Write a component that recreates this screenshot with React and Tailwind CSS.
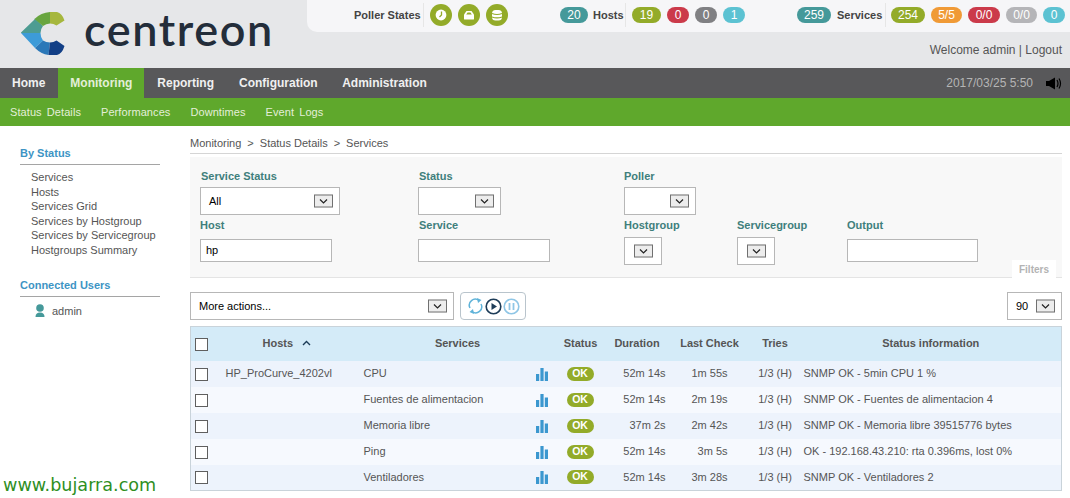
import React from "react";

const F = "[font-family:'Liberation_Sans',Arial,sans-serif]";

function Pill({ c, children, w }) {
  return (
    <span className={`inline-flex h-[16px] items-center justify-center rounded-full text-[12px] font-normal text-white ${c} ${w}`}>
      {children}
    </span>
  );
}

function Logo() {
  return (
    <svg width="60" height="52" viewBox="0 0 60 52" className="block">
      <path d="M6 24.5 L19 12 L20 10.5 L28 18 Q25.5 21 25.5 25 L6 25 Z" fill="#4d9c92" />
      <path d="M19.5 11 Q26 4.5 35 4 L35 15.5 Q31 15.5 28 18 Z" fill="#68a53f" />
      <path d="M35 4 L42 4 Q47 5 49.5 12.5 L41.5 17.5 Q38.5 15.5 35 15.5 Z" fill="#a6b73d" />
      <path d="M6 25 L25.5 25 Q25.5 29.5 28 32.5 L20 40 Z" fill="#3d9bd8" />
      <path d="M20 40 L28 32.5 Q31 34.5 35 34.5 L33.5 47 Q26 46 20 40 Z" fill="#2b78b8" />
      <path d="M35 34.5 Q38.5 34.5 41.5 32.5 L49.5 38 Q47 46 42 47 L33.5 47 Z" fill="#123f86" />
    </svg>
  );
}

function Sel({ w, value, h = "h-[28px]", btn = "right-[6px]" }) {
  return (
    <div className={`relative flex ${w} ${h} items-center border border-[#b7b7b7] bg-white pl-[8px] text-[11px] text-black`}>
      {value}
      <span className={`absolute ${btn} top-1/2 flex h-[13px] w-[19px] -translate-y-1/2 items-center justify-center border border-[#707070] bg-[#ededed]`}>
        <svg width="9" height="6" viewBox="0 0 9 6"><path d="M1 1 L4.5 4.5 L8 1" fill="none" stroke="#222" strokeWidth="1.2" /></svg>
      </span>
    </div>
  );
}

function Label({ children, inset = "" }) {
  return <div className={`h-[16px] text-[11px] font-bold leading-[16px] text-[#3f7f7c] ${inset}`}>{children}</div>;
}

function Input({ w, value }) {
  return (
    <div className={`flex ${w} h-[23px] items-center border border-[#b7b7b7] bg-white pl-[5px] text-[11px] text-black`}>{value}</div>
  );
}

function Check() {
  return <span className="mt-[1px] block h-[13px] w-[13px] border border-[#5f5f5f] bg-white" />;
}

function Bars() {
  return (
    <svg width="12" height="13" viewBox="0 0 12 13" className="mt-[1px] block">
      <rect x="0" y="6" width="3.2" height="7" fill="#3b97cf" />
      <rect x="4.4" y="0" width="3.2" height="13" fill="#3b97cf" />
      <rect x="8.8" y="3.5" width="3.2" height="9.5" fill="#3b97cf" />
    </svg>
  );
}

const rows = [
  ["HP_ProCurve_4202vl", "CPU", "52m 14s", "1m 55s", "SNMP OK - 5min CPU 1 %"],
  ["", "Fuentes de alimentacion", "52m 14s", "2m 19s", "SNMP OK - Fuentes de alimentacion 4"],
  ["", "Memoria libre", "37m 2s", "2m 42s", "SNMP OK - Memoria libre 39515776 bytes"],
  ["", "Ping", "52m 14s", "3m 5s", "OK - 192.168.43.210: rta 0.396ms, lost 0%"],
  ["", "Ventiladores", "52m 14s", "3m 28s", "SNMP OK - Ventiladores 2"],
];

export default function App() {
  return (
    <div className={`relative h-[498px] w-[1070px] overflow-hidden bg-white ${F}`}>
      {/* header */}
      <header className="flex h-[68px] bg-[#e6e7e9]">
        <div className="flex h-full w-[307px] shrink-0 items-start pl-[15px] pt-[8px]">
          <Logo />
          <span className="ml-[9px] mt-[-5px] text-[45px] font-semibold leading-[52px] tracking-[1.6px] text-[#232d3a] [font-family:Lato,sans-serif]">centreon</span>
        </div>
        <div className="flex flex-1 flex-col">
          <div className="flex h-[32px] items-center rounded-bl-[10px] bg-[#f6f6f8] pb-[2px] text-[11px] font-bold text-[#444]">
            <span className="ml-[47px] w-[67px] whitespace-nowrap">Poller States</span>
            <span className="ml-[2px] h-[24px] w-px bg-[#e6e6e6]" />
            <span className="ml-[6px] flex gap-[6px]">
              {[
                <g key="a"><circle cx="11" cy="11" r="5.4" fill="#fff" /><path d="M11.5 7.5 V11 L9.5 13" stroke="#93ab29" strokeWidth="1.3" fill="none" /></g>,
                <g key="b"><path d="M6 15 V10.5 L8.5 7 H13.5 L16 10.5 V15 Q16 15.5 15 15.5 H7 Q6 15.5 6 15 Z" fill="#fff" /><path d="M8.2 10.5 L9.6 8.6 H12.4 L13.8 10.5 Z" fill="#93ab29" /></g>,
                <g key="c"><rect x="6" y="6" width="10" height="10.5" rx="3.5" fill="#fff" /><path d="M6 9.6 Q11 11.4 16 9.6 M6 13 Q11 14.8 16 13" stroke="#93ab29" strokeWidth="1.1" fill="none" /></g>,
              ].map((g, i) => (
                <svg key={i} width="22" height="22" viewBox="0 0 22 22" className="block"><circle cx="11" cy="11" r="11" fill="#93ab29" />{g}</svg>
              ))}
            </span>
            <span className="ml-[52px]"><Pill c="bg-[#45999a]" w="w-[28px]">20</Pill></span>
            <span className="ml-[5px] w-[30px]">Hosts</span>
            <span className="ml-[2px] h-[24px] w-px bg-[#e6e6e6]" />
            <span className="ml-[6px] flex gap-[6px]">
              <Pill c="bg-[#93ab29]" w="w-[29px]">19</Pill>
              <Pill c="bg-[#cb3a4a]" w="w-[22px]">0</Pill>
              <Pill c="bg-[#808083]" w="w-[22px]">0</Pill>
              <Pill c="bg-[#5cc2d2]" w="w-[22px]">1</Pill>
            </span>
            <span className="ml-[52px]"><Pill c="bg-[#45999a]" w="w-[34px]">259</Pill></span>
            <span className="ml-[6px] w-[44px]">Services</span>
            <span className="ml-[4px] h-[24px] w-px bg-[#e6e6e6]" />
            <span className="ml-[5px] flex gap-[6px]">
              <Pill c="bg-[#93ab29]" w="w-[34px]">254</Pill>
              <Pill c="bg-[#f09a36]" w="w-[31px]">5/5</Pill>
              <Pill c="bg-[#cb3a4a]" w="w-[32px]">0/0</Pill>
              <Pill c="bg-[#b5b5b8]" w="w-[31px]">0/0</Pill>
              <Pill c="bg-[#5cc2d2]" w="w-[22px]">0</Pill>
            </span>
          </div>
          <div className="pr-[8px] pt-[10px] text-right text-[12px] leading-[16px] text-[#555]">Welcome admin | Logout</div>
        </div>
      </header>

      {/* nav */}
      <nav className="flex h-[30px] items-center bg-[#58585a] text-[12px] font-bold text-[#f0f0f0]">
        <span className="pl-[12px] pr-[13px]">Home</span>
        <span className="flex h-full w-[86px] items-center justify-center bg-[#5fa82c] text-[#e4efd9]">Monitoring</span>
        <span className="ml-[13px]">Reporting</span>
        <span className="ml-[25px]">Configuration</span>
        <span className="ml-[24.5px]">Administration</span>
        <span className="ml-auto text-[12px] font-normal text-[#b5b5b5]">2017/03/25 5:50</span>
        <svg width="16" height="13" viewBox="0 0 16 13" className="ml-[13px] mr-[8px]">
          <path d="M0 4 H3 L9 0.5 V12.5 L3 9 H0 Z" fill="#000" />
          <path d="M11 3 Q13 6.5 11 10 M13 1.5 Q16 6.5 13 11.5" stroke="#000" strokeWidth="1.2" fill="none" />
        </svg>
      </nav>
      <div className="flex h-[28px] items-center gap-[20px] bg-[#5fa82c] pl-[10px] text-[11px] tracking-[0.08px] text-[#e4efd9]">
        <span className="[word-spacing:2px]">Status Details</span>
        <span>Performances</span>
        <span>Downtimes</span>
        <span className="[word-spacing:2px]">Event Logs</span>
      </div>

      <div className="flex">
        {/* sidebar */}
        <aside className="w-[190px] shrink-0 pl-[20px] pt-[20px]">
          <div className="w-[140px] border-b border-[#a5a5a5] pb-[4px] text-[11px] font-bold leading-[14px] text-[#3d94c4]">By Status</div>
          <ul className="pl-[11px] pt-[5px] text-[11px] leading-[14.6px] text-[#555]">
            <li>Services</li>
            <li>Hosts</li>
            <li>Services Grid</li>
            <li>Services by Hostgroup</li>
            <li className="whitespace-nowrap">Services by Servicegroup</li>
            <li>Hostgroups Summary</li>
          </ul>
          <div className="mt-[20px] w-[140px] border-b border-[#a5a5a5] pb-[4px] text-[11px] font-bold leading-[14px] text-[#3d94c4]">Connected Users</div>
          <div className="flex items-center gap-[7px] pl-[15px] pt-[7px] text-[11px] leading-[14px] text-[#555]">
            <svg width="10" height="13" viewBox="0 0 10 13" className="block">
              <circle cx="5" cy="4" r="3.8" fill="#45999a" />
              <path d="M0.5 13 Q0.5 8.5 5 8.5 Q9.5 8.5 9.5 13 Z" fill="#45999a" />
            </svg>
            <span>admin</span>
          </div>
        </aside>

        {/* main */}
        <main className="w-[872px] pt-[10px]">
          <div className="flex h-[17px] gap-[6px] text-[11px] leading-[14px] text-[#555]">
            <span>Monitoring</span><span>&gt;</span><span>Status Details</span><span>&gt;</span><span>Services</span>
          </div>
          <div className="h-[4px] border-t border-[#d5d5d5] bg-white" />
          <section className="relative h-[121px] border-b border-[#e4e4e4] bg-[#f8f8f8] pl-[10px] pt-[11px]">
            <div className="flex">
              <div className="w-[218px]"><Label inset="pl-[1px] mb-[3px]">Service Status</Label><Sel w="w-[140px]" value="All" /></div>
              <div className="w-[206px]"><Label inset="pl-[1px] mb-[3px]">Status</Label><Sel w="w-[83px]" value="" /></div>
              <div><Label inset="mb-[3px]">Poller</Label><Sel w="w-[72px]" value="" /></div>
            </div>
            <div className="mt-[2px] flex">
              <div className="w-[218px]"><Label>Host</Label><div className="mt-[6px]"><Input w="w-[132px]" value="hp" /></div></div>
              <div className="w-[206px]"><Label inset="pl-[1px]">Service</Label><div className="mt-[6px]"><Input w="w-[132px]" value="" /></div></div>
              <div className="w-[113px]"><Label>Hostgroup</Label><div className="mt-[4px]"><Sel w="w-[38px]" value="" btn="right-[8px]" /></div></div>
              <div className="w-[110px]"><Label>Servicegroup</Label><div className="mt-[4px]"><Sel w="w-[38px]" value="" btn="right-[8px]" /></div></div>
              <div><Label>Output</Label><div className="mt-[6px]"><Input w="w-[131px]" value="" /></div></div>
            </div>
            <span className="absolute bottom-[-1px] right-[6px] flex h-[18px] w-[44px] items-center justify-center bg-white pt-[1px] text-[10px] font-bold text-[#b3b3b3]">Filters</span>
          </section>

          <div className="mb-[6px] mt-[14px] flex h-[28px] items-stretch">
            <Sel w="w-[264px]" value="More actions..." />
            <div className="ml-[6px] flex w-[66px] items-center justify-center gap-[1px] rounded-[4px] border border-[#b9c4cc]">
              <svg width="17" height="18" viewBox="0 0 17 18">
                <path d="M3 11 A6 6 0 0 1 12 3.5 M14 7 A6 6 0 0 1 5 14.5" fill="none" stroke="#5fb3d9" strokeWidth="1.5" />
                <path d="M10 1 L14.5 3 L11 6 Z M7 17 L2.5 15 L6 12 Z" fill="#5fb3d9" />
              </svg>
              <svg width="17" height="17" viewBox="0 0 17 17">
                <circle cx="8.5" cy="8.5" r="7.3" fill="none" stroke="#1d3c58" strokeWidth="1.6" />
                <path d="M6.5 5 L12 8.5 L6.5 12 Z" fill="#1d3c58" />
              </svg>
              <svg width="17" height="17" viewBox="0 0 17 17">
                <circle cx="8.5" cy="8.5" r="7.3" fill="none" stroke="#8fc6e6" strokeWidth="1.6" />
                <path d="M6.5 5 V12 M10.5 5 V12" stroke="#8fc6e6" strokeWidth="1.8" />
              </svg>
            </div>
            <div className="ml-auto"><Sel w="w-[55px]" value="90" /></div>
          </div>

          <table className="w-[872px] table-fixed border-collapse border border-[#c9d3da] text-[11px] text-[#555]">
            <colgroup>
              <col className="w-[30px]" />
              <col className="w-[140px]" />
              <col className="w-[168px]" />
              <col className="w-[28px]" />
              <col className="w-[48px]" />
              <col className="w-[65px]" />
              <col className="w-[80px]" />
              <col className="w-[51px]" />
              <col />
            </colgroup>
            <thead>
              <tr className="h-[34px] bg-[#d4ebf8] font-bold text-[#555]">
                <th className="pl-[4px]"><Check /></th>
                <th className="pb-[2px] pl-[42px] text-left font-bold">
                  <span className="inline-flex items-center gap-[9px]">Hosts
                    <svg width="9" height="6" viewBox="0 0 9 6"><path d="M1 5 L4.5 1.5 L8 5" fill="none" stroke="#1d3c58" strokeWidth="1.4" /></svg>
                  </span>
                </th>
                <th colSpan={2} className="pb-[2px] pr-[2px] font-bold">Services</th>
                <th className="pb-[2px] font-bold">Status</th>
                <th className="pb-[2px] font-bold">Duration</th>
                <th className="pb-[2px] font-bold">Last Check</th>
                <th className="pb-[2px] font-bold">Tries</th>
                <th className="pb-[2px] font-bold">Status information</th>
              </tr>
            </thead>
            <tbody>
              {rows.map((r, i) => (
                <tr key={i} className={`h-[26px] ${i % 2 === 0 ? "bg-[#edf3fc]" : "bg-[#f6f9fe]"}`}>
                  <td className="pl-[4px]"><Check /></td>
                  <td className="pl-[5px]">{r[0]}</td>
                  <td className="pl-[3px]">{r[1]}</td>
                  <td><div className="ml-[7px]"><Bars /></div></td>
                  <td>
                    <span className="ml-[10px] flex h-[14px] w-[27px] items-center justify-center rounded-full bg-[#93ab29] text-[10.5px] font-bold text-white">OK</span>
                  </td>
                  <td className="pr-[4px] text-right">{r[2]}</td>
                  <td className="pr-[22px] text-right">{r[3]}</td>
                  <td className="text-center">1/3 (H)</td>
                  <td className="pl-[3px]">{r[4]}</td>
                </tr>
              ))}
            </tbody>
          </table>
        </main>
      </div>

      <div className="absolute bottom-[2px] left-[3px] text-[17.6px] leading-[22px] text-[#2f8f1f] [font-family:'DejaVu_Sans',sans-serif]">www.bujarra.com</div>
    </div>
  );
}
